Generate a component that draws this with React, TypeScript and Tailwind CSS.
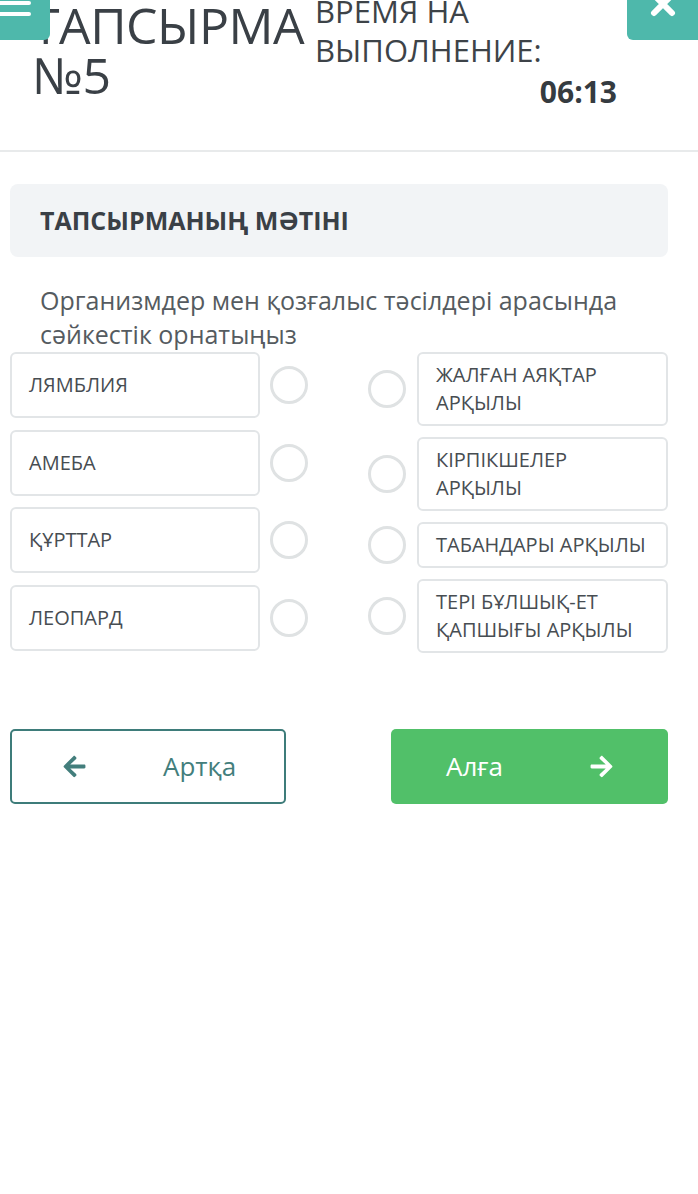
import { FaArrowLeft, FaArrowRight } from "react-icons/fa";

const left = ["ЛЯМБЛИЯ", "АМЕБА", "ҚҰРТТАР", "ЛЕОПАРД"];
const right = [
  "ЖАЛҒАН АЯҚТАР АРҚЫЛЫ",
  "КІРПІКШЕЛЕР АРҚЫЛЫ",
  "ТАБАНДАРЫ АРҚЫЛЫ",
  "ТЕРІ БҰЛШЫҚ-ЕТ ҚАПШЫҒЫ АРҚЫЛЫ",
];

function Ring() {
  return <div className="h-[38px] w-[38px] shrink-0 rounded-full border-[3px] border-[#dfe2e3] bg-white" />;
}

export default function App() {
  return (
    <div className="relative min-h-[1194px] bg-white font-['Open_Sans',sans-serif] text-[#3d4348]">
      {/* top buttons, scrolled half out of view */}
      <div className="absolute left-0 top-0 z-10 h-[40px] w-[50px] rounded-br-[6px] bg-[#4eb8ab]">
        <div className="mt-[1px] h-[4px] w-[31px] rounded-r-sm bg-white" />
        <div className="mt-[7px] h-[4px] w-[31px] rounded-r-sm bg-white" />
      </div>
      <div className="absolute right-0 top-0 z-10 flex h-[40px] w-[71px] justify-center rounded-bl-[6px] bg-[#4eb8ab]">
        <svg width="28" height="28" viewBox="0 0 28 28" className="-mt-[10px]">
          <path d="M5 5 L23 23 M23 5 L5 23" stroke="white" strokeWidth="6" strokeLinecap="round" />
        </svg>
      </div>

      {/* Header */}
      <header className="flex h-[152px] border-b-2 border-[#e8eaeb]">
        <h1 className="ml-[32px] w-[283px] text-[50px] font-normal leading-[50px] tracking-[-0.5px] text-[#3a4046]">
          ТАПСЫРМА №5
        </h1>
        <div className="-mt-[8px] flex w-[302px] flex-col text-[31px] leading-[39px] text-[#3d4348]">
          <span>ВРЕМЯ НА</span>
          <span>ВЫПОЛНЕНИЕ:</span>
          <span className="mt-[2px] self-end text-[30px] font-bold text-[#353b40]">06:13</span>
        </div>
      </header>

      {/* Task */}
      <section className="px-[10px] pt-[32px]">
        <div className="mr-[20px] flex h-[73px] items-center rounded-[8px] bg-[#f2f4f6] px-[30px]">
          <h2 className="text-[25px] font-bold text-[#3a4046]">ТАПСЫРМАНЫҢ МӘТІНІ</h2>
        </div>
        <p className="mt-[26px] pl-[30px] text-[25px] leading-[34px] text-[#555b60]">
          Организмдер мен қозғалыс тәсілдері арасында сәйкестік орнатыңыз
        </p>

        <div className="mt-[1px] flex gap-[10px] pr-[20px]">
          <div className="flex flex-col gap-[11.7px]">
            {left.map((t) => (
              <div key={t} className="flex items-center gap-[10px]">
                <div className="flex h-[66px] w-[250px] items-center rounded-[6px] border-2 border-[#e2e5e7] px-[17px] text-[20px] text-[#474d52]">
                  {t}
                </div>
                <Ring />
              </div>
            ))}
          </div>
          <div className="ml-[50px] flex flex-1 flex-col gap-[11px]">
            {right.map((t) => (
              <div key={t} className="flex items-center gap-[11px]">
                <Ring />
                <div className="flex-1 rounded-[6px] border-2 border-[#e2e5e7] py-[7px] pl-[17px] pr-[14px] text-[20px] leading-[28px] text-[#474d52]">
                  {t}
                </div>
              </div>
            ))}
          </div>
        </div>

        {/* Nav */}
        <div className="mt-[76px] flex justify-between pr-[20px]">
          <button className="flex h-[75px] w-[276px] items-center rounded-[5px] border-2 border-[#3e7c7a] pl-[50px] text-[#437e7c]">
            <FaArrowLeft className="h-[25px] w-[25px]" />
            <span className="ml-[76px] text-[26px]">Артқа</span>
          </button>
          <button className="flex h-[75px] w-[277px] items-center rounded-[5px] bg-[#51c069] pl-[55px] text-white">
            <span className="text-[26px]">Алға</span>
            <FaArrowRight className="ml-[86px] h-[25px] w-[25px]" />
          </button>
        </div>
      </section>
    </div>
  );
}
